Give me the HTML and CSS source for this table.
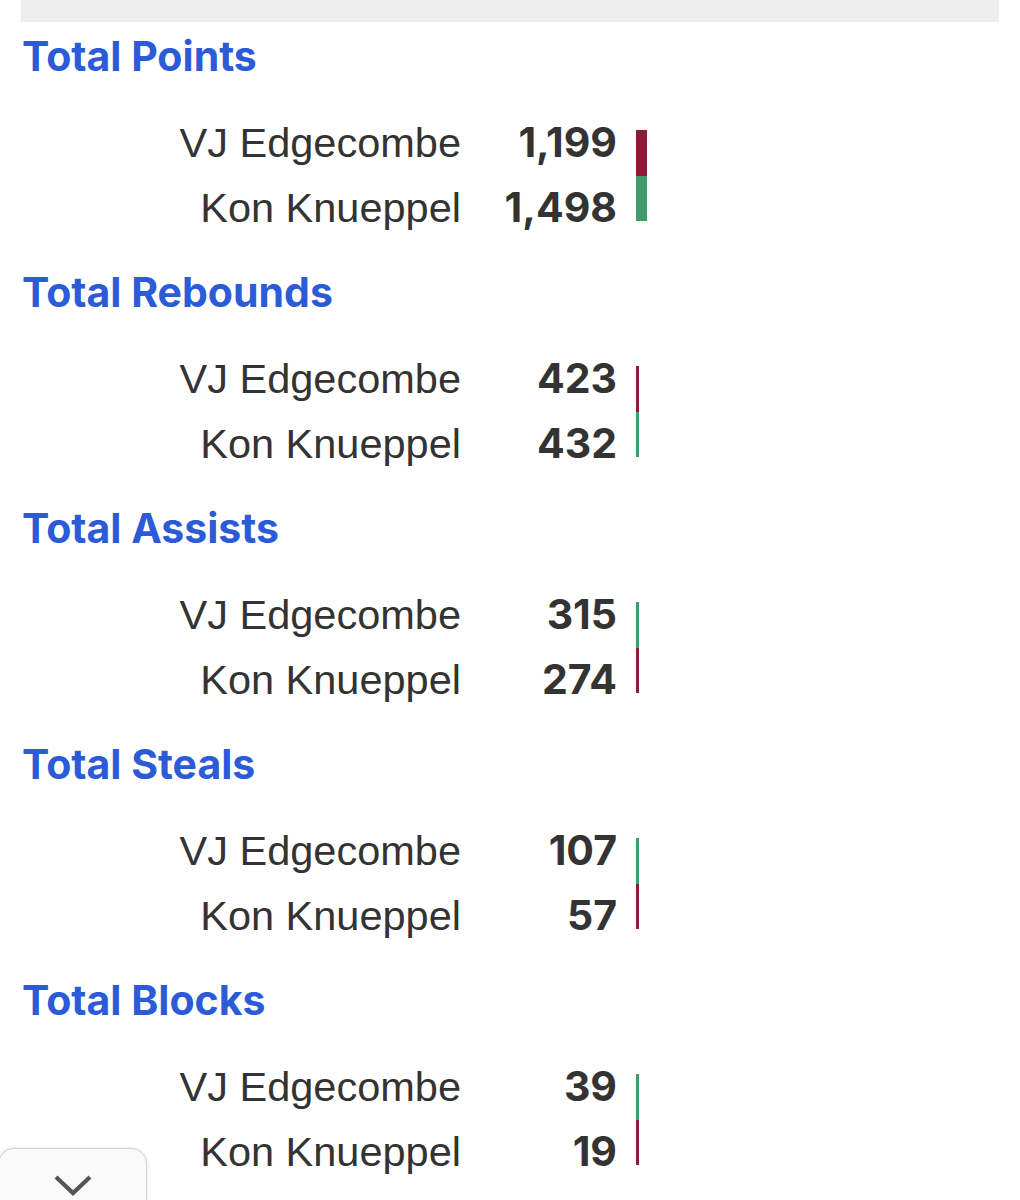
FILE: index.html
```html
<!DOCTYPE html>
<html>
<head>
<meta charset="utf-8">
<link rel="stylesheet" href="styles.css">
</head>
<body>
<div class="topbar"></div>

<section class="stat">
  <h2 class="stat-title">Total Points</h2>
  <div class="rows">
    <div class="names"><div>VJ Edgecombe</div><div>Kon Knueppel</div></div>
    <div class="nums"><div>1,199</div><div>1,498</div></div>
    <div class="bar bar-w11"><span class="lose"></span><span class="win"></span></div>
  </div>
</section>

<section class="stat">
  <h2 class="stat-title">Total Rebounds</h2>
  <div class="rows">
    <div class="names"><div>VJ Edgecombe</div><div>Kon Knueppel</div></div>
    <div class="nums"><div>423</div><div>432</div></div>
    <div class="bar bar-w3"><span class="lose"></span><span class="win"></span></div>
  </div>
</section>

<section class="stat">
  <h2 class="stat-title">Total Assists</h2>
  <div class="rows">
    <div class="names"><div>VJ Edgecombe</div><div>Kon Knueppel</div></div>
    <div class="nums"><div>315</div><div>274</div></div>
    <div class="bar bar-w3"><span class="win"></span><span class="lose"></span></div>
  </div>
</section>

<section class="stat">
  <h2 class="stat-title">Total Steals</h2>
  <div class="rows">
    <div class="names"><div>VJ Edgecombe</div><div>Kon Knueppel</div></div>
    <div class="nums"><div>107</div><div>57</div></div>
    <div class="bar bar-w2"><span class="win"></span><span class="lose"></span></div>
  </div>
</section>

<section class="stat">
  <h2 class="stat-title">Total Blocks</h2>
  <div class="rows">
    <div class="names"><div>VJ Edgecombe</div><div>Kon Knueppel</div></div>
    <div class="nums"><div>39</div><div>19</div></div>
    <div class="bar bar-w2"><span class="win"></span><span class="lose"></span></div>
  </div>
</section>

<div class="drawer-tab">
  <svg width="40" height="22" viewBox="0 0 40 22"><path d="M3 3 L20 19 L37 3" fill="none" stroke="#555" stroke-width="4.2" stroke-linecap="butt" stroke-linejoin="miter"/></svg>
</div>
</body>
</html>
```

FILE: styles.css
```css
html, body {
  margin: 0;
  padding: 0;
  background: #ffffff;
}
body {
  font-family: "Liberation Sans", Arial, sans-serif;
  color: #333333;
  overflow: hidden;
}
.topbar {
  height: 22px;
  margin: 0 21px 10px 21px;
  background: #eeeeee;
}
.stat {
  padding-bottom: 28px;
}
.stat:last-of-type {
  padding-bottom: 0;
}
.stat-title {
  margin: 0 0 30px 22px;
  font-family: Inter, "Liberation Sans", sans-serif;
  font-weight: 700;
  font-size: 41px;
  line-height: 48px;
  letter-spacing: 0;
  color: #2b5bd6;
}
.rows {
  display: flex;
  align-items: flex-start;
}
.names {
  width: 461px;
  text-align: right;
  font-size: 41.5px;
  line-height: 65px;
  color: #333333;
}
.nums {
  width: 156px;
  text-align: right;
  font-family: Inter, "Liberation Sans", sans-serif;
  font-weight: 700;
  font-size: 41px;
  line-height: 65px;
  color: #333333;
}
.bar {
  margin: 20px 0 0 19px;
  height: 91px;
  display: flex;
  flex-direction: column;
}
.bar span {
  flex: 1;
}
.bar-w11 { width: 11px; }
.bar-w3 { width: 3px; }
.bar-w2 { width: 2.5px; }
.lose { background: #8e1b35; }
.win { background: #3f9a6c; }
.drawer-tab {
  position: fixed;
  left: -2px;
  bottom: -20px;
  width: 149px;
  height: 72px;
  background: #fafafa;
  border: 1px solid #d2d2d2;
  border-radius: 16px;
  box-shadow: 0 0 4px rgba(0, 0, 0, 0.12);
  display: flex;
  justify-content: center;
  padding-top: 25px;
  box-sizing: border-box;
}
.drawer-tab svg {
  display: block;
}
```
